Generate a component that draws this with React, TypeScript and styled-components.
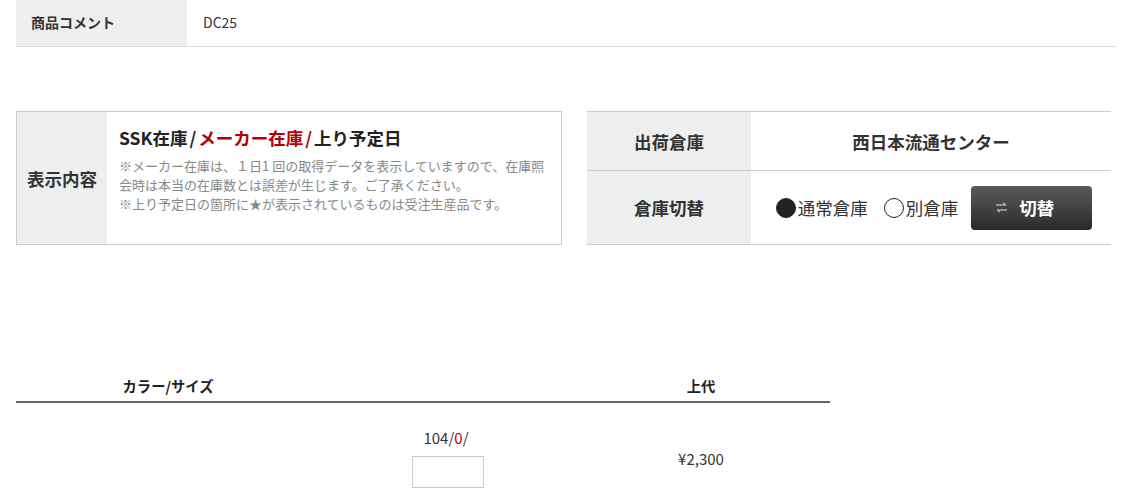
import React from "react";
import styled, { createGlobalStyle } from "styled-components";

const Global = createGlobalStyle`
  html, body { margin: 0; padding: 0; background: #fff; }
  body {
    font-family: "Noto Sans CJK JP", "Noto Sans", sans-serif;
    color: #333;
  }
`;

const Page = styled.div`
  padding: 0 16px;
  width: 1100px;
`;

const InfoRow = styled.div`
  display: flex;
  height: 46px;
  border-bottom: 1px solid #ddd;
`;

const InfoLabel = styled.div`
  width: 171px;
  background: #eee;
  display: flex;
  align-items: center;
  padding: 0 0 3px 15px;
  box-sizing: border-box;
  font-size: 14px;
  font-weight: 700;
  color: #333;
`;

const InfoValue = styled.div`
  display: flex;
  align-items: center;
  padding: 0 0 3px 16px;
  font-size: 14px;
  color: #333;
`;

const Middle = styled.div`
  display: flex;
  gap: 25px;
  margin-top: 64px;
  align-items: flex-start;
`;

const NoticeBox = styled.div`
  width: 546px;
  height: 134px;
  box-sizing: border-box;
  border: 1px solid #ccc;
  display: flex;
`;

const NoticeLabel = styled.div`
  width: 90px;
  background: #eee;
  display: flex;
  align-items: center;
  justify-content: center;
  font-size: 17.5px;
  font-weight: 700;
  color: #333;
`;

const NoticeBody = styled.div`
  padding: 12px 10px 0 12px;
  flex: 1;
`;

const NoticeTitle = styled.div`
  font-size: 17.5px;
  font-weight: 700;
  color: #222;
  line-height: 28px;
  margin-bottom: 4px;
`;

const Sep = styled.span<{ $red?: boolean }>`
  margin: 0 2px;
  color: ${(p) => (p.$red ? "#b30000" : "inherit")};
`;

const Red = styled.span`
  color: #b30000;
`;

const Note = styled.div`
  font-size: 13px;
  line-height: 19px;
  color: #888;
`;

const WareTable = styled.div`
  width: 524px;
  border-top: 1px solid #ccc;
`;

const WareRow = styled.div<{ $h: number }>`
  display: flex;
  box-sizing: border-box;
  height: ${(p) => p.$h}px;
  border-bottom: 1px solid #ccc;
`;

const WareLabel = styled.div`
  width: 164px;
  background: #eee;
  display: flex;
  align-items: center;
  justify-content: center;
  font-size: 17.5px;
  font-weight: 700;
  color: #333;
`;

const WareValue = styled.div<{ $bold?: boolean }>`
  flex: 1;
  display: flex;
  align-items: center;
  justify-content: center;
  font-size: 17.5px;
  font-weight: ${(p) => (p.$bold ? 700 : 400)};
  color: #333;
`;

const Radio = styled.span<{ $gap: number }>`
  color: #333;
  display: inline-flex;
  align-items: center;
  margin-right: ${(p) => p.$gap}px;
`;

const Dot = styled.span<{ $on?: boolean }>`
  width: 20px;
  height: 20px;
  border-radius: 50%;
  box-sizing: border-box;
  border: 1.5px solid #222;
  background: ${(p) => (p.$on ? "#222" : "#fff")};
  margin-right: 2px;
`;

const SwitchButton = styled.button`
  width: 121px;
  height: 44px;
  border: none;
  border-radius: 4px;
  background: linear-gradient(#5a5a5a, #2a2a2a);
  color: #fff;
  font-family: inherit;
  font-size: 17.5px;
  font-weight: 700;
  display: flex;
  align-items: center;
  justify-content: center;
  gap: 11px;
  padding: 0 14px 0 0;
  margin-right: -6px;
`;

const Stock = styled.div`
  margin-top: 125px;
  width: 814px;
`;

const StockHead = styled.div`
  display: grid;
  grid-template-columns: 304px 252px 258px;
  border-bottom: 2px solid #666;
  height: 31px;
  align-items: center;
  font-size: 14.3px;
  font-weight: 700;
  color: #222;
`;

const StockRow = styled.div`
  display: grid;
  grid-template-columns: 304px 252px 258px;
  align-items: center;
  padding-top: 25px;
  font-size: 15px;
  color: #333;
`;

const Cell = styled.div`
  text-align: center;
  display: flex;
  flex-direction: column;
  align-items: center;
`;

const Qty = styled.div`
  line-height: 20px;
  margin-bottom: 8px;
`;

const QtyInput = styled.input`
  width: 72px;
  height: 32px;
  box-sizing: border-box;
  border: 1px solid #ccc;
  border-radius: 0;
  margin: 0 0 0 4px;
`;

const SwapIcon = () => (
  <svg width="13" height="11" viewBox="0 0 13 11" fill="none" stroke="#aaa" strokeWidth="1.4">
    <path d="M1 3h10M8 0.7l3 2.3" />
    <path d="M12 8H2M5 10.3L2 8" />
  </svg>
);

export default function App() {
  return (
    <>
      <Global />
      <Page>
        <InfoRow>
          <InfoLabel>商品コメント</InfoLabel>
          <InfoValue>DC25</InfoValue>
        </InfoRow>
        <Middle>
          <NoticeBox>
            <NoticeLabel>表示内容</NoticeLabel>
            <NoticeBody>
              <NoticeTitle>
                SSK在庫<Sep>/</Sep>
                <Red>メーカー在庫</Red>
                <Sep $red>/</Sep>上り予定日
              </NoticeTitle>
              <Note>
                ※メーカー在庫は、１日1 回の取得データを表示していますので、在庫照会時は本当の在庫数とは誤差が生じます。ご了承ください。
              </Note>
              <Note>※上り予定日の箇所に★が表示されているものは受注生産品です。</Note>
            </NoticeBody>
          </NoticeBox>
          <WareTable>
            <WareRow $h={59}>
              <WareLabel>出荷倉庫</WareLabel>
              <WareValue $bold>西日本流通センター</WareValue>
            </WareRow>
            <WareRow $h={74}>
              <WareLabel>倉庫切替</WareLabel>
              <WareValue>
                <Radio $gap={16}>
                  <Dot $on />
                  通常倉庫
                </Radio>
                <Radio $gap={13}>
                  <Dot />
                  別倉庫
                </Radio>
                <SwitchButton>
                  <SwapIcon />
                  切替
                </SwitchButton>
              </WareValue>
            </WareRow>
          </WareTable>
        </Middle>
        <Stock>
          <StockHead>
            <Cell>カラー/サイズ</Cell>
            <Cell />
            <Cell>上代</Cell>
          </StockHead>
          <StockRow>
            <Cell />
            <Cell>
              <Qty>
                104/<Red>0</Red>/
              </Qty>
              <QtyInput />
            </Cell>
            <Cell>¥2,300</Cell>
          </StockRow>
        </Stock>
      </Page>
    </>
  );
}
